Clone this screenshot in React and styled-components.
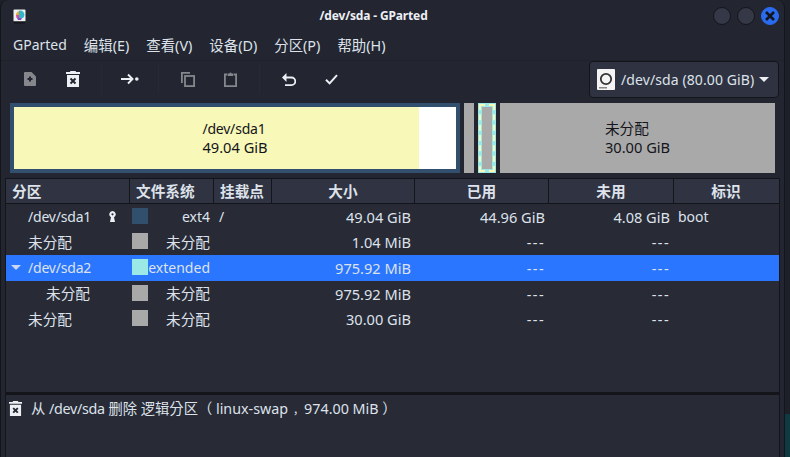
import styled, { createGlobalStyle } from "styled-components"

const FONT = `"Noto Sans", "Noto Sans CJK SC", sans-serif`

const Global = createGlobalStyle`
html, body {
    margin: 0;
    padding: 0;
    height: 457px;
    overflow: hidden;
    background: linear-gradient(#1e2029 414px, #0e3b42 414px);
}
`

const columns = [
    { title: "分区", width: 124, align: "left" },
    { title: "文件系统", width: 84, align: "left" },
    { title: "挂载点", width: 58, align: "left" },
    { title: "大小", width: 143, align: "center" },
    { title: "已用", width: 134, align: "center" },
    { title: "未用", width: 125, align: "center" },
    { title: "标识", width: 106, align: "center" },
]

const rows = [
    { name: "/dev/sda1", indent: 0, key: true, color: "#32506e", fs: "ext4", mount: "/", size: "49.04 GiB", used: "44.96 GiB", free: "4.08 GiB", flag: "boot" },
    { name: "未分配", cjk: true, indent: 0, color: "#a9a9a9", fs: "未分配", size: "1.04 MiB", used: "---", free: "---" },
    { name: "/dev/sda2", indent: 0, expander: true, selected: true, color: "#9ce8e6", fs: "extended", size: "975.92 MiB", used: "---", free: "---" },
    { name: "未分配", cjk: true, indent: 18, color: "#a9a9a9", fs: "未分配", size: "975.92 MiB", used: "---", free: "---" },
    { name: "未分配", cjk: true, indent: 0, color: "#a9a9a9", fs: "未分配", size: "30.00 GiB", used: "---", free: "---" },
]

function TrashIcon({ size = 14, color = "#eceff4" }) {
    return (
        <svg width={size} height={size + 2} viewBox="0 0 14 16">
            <path fill={color} d="M4.5 0h5l.7 1H14v2H0V1h3.8zM1 4h12v12H1z" />
            <path stroke="#232530" strokeWidth="2" d="M4.5 7.5l5 5M9.5 7.5l-5 5" />
        </svg>
    )
}

export default function App() {
    return (
        <Window>
            <Global />
            <TitleBar>
                <AppLogo width="13" height="15" viewBox="0 0 13 15">
                    <rect x="0.5" y="0.5" width="12" height="12" rx="1" fill="#f0f0f0" />
                    <rect x="1" y="12.5" width="11" height="2" fill="#14151b" />
                    <path fill="#35b5c9" d="M6 2c2-1 4 0 5 2s0 4-1 5H6z" />
                    <path fill="#e9a72e" d="M3 6c0-2 1-3 3-4v4z" />
                    <path fill="#d54a9c" d="M3 6h3v3H3.500z" />
                    <path fill="#7b4bc4" d="M4 9h5l-1 2H5z" />
                </AppLogo>
                <Title>/dev/sda - GParted</Title>
                <WindowButtons>
                    <RoundButton />
                    <RoundButton />
                    <RoundButton $close>
                        <svg width="10" height="10" viewBox="0 0 10 10">
                            <path stroke="#14151b" strokeWidth="2.6" d="M1 1l8 8M9 1l-8 8" />
                        </svg>
                    </RoundButton>
                </WindowButtons>
            </TitleBar>

            <MenuBar>
                <MenuItem $latin>GParted</MenuItem>
                <MenuItem>编辑(E)</MenuItem>
                <MenuItem>查看(V)</MenuItem>
                <MenuItem>设备(D)</MenuItem>
                <MenuItem>分区(P)</MenuItem>
                <MenuItem>帮助(H)</MenuItem>
            </MenuBar>

            <ToolBar>
                <ToolGroup>
                    <ToolButton>
                        <svg width="12" height="14" viewBox="0 0 12 14">
                            <path fill="#85878d" d="M1 0h6.500L12 4.500V13a1 1 0 0 1-1 1H1a1 1 0 0 1-1-1V1a1 1 0 0 1 1-1z" />
                            <path stroke="#232530" strokeWidth="2" d="M6 4.500v5M3.500 7h5" />
                        </svg>
                    </ToolButton>
                    <ToolButton>
                        <TrashIcon />
                    </ToolButton>
                </ToolGroup>
                <Separator />
                <ToolGroup>
                    <ToolButton $narrow>
                        <svg width="18" height="14" viewBox="0 0 18 14">
                            <path stroke="#eceff4" strokeWidth="1.9" fill="none" d="M0 7h11M7 2.500L11.500 7 7 11.500" />
                            <circle cx="15.800" cy="7" r="1.800" fill="#eceff4" />
                        </svg>
                    </ToolButton>
                </ToolGroup>
                <Separator />
                <ToolGroup>
                    <ToolButton>
                        <svg width="14" height="15" viewBox="0 0 14 15">
                            <path stroke="#85878d" strokeWidth="1.800" fill="none" d="M.9 11V.9H9" />
                            <rect x="4" y="4" width="9.100" height="10.100" stroke="#85878d" strokeWidth="1.800" fill="none" />
                        </svg>
                    </ToolButton>
                    <ToolButton>
                        <svg width="13" height="15" viewBox="0 0 13 15">
                            <path stroke="#85878d" strokeWidth="1.800" fill="none" d="M3.500 2.500H.9v11.600h11.200V2.500H9.500" />
                            <path fill="#85878d" d="M4 1.500h1.500a1 1 0 0 1 2 0H9V4H4z" />
                        </svg>
                    </ToolButton>
                </ToolGroup>
                <Separator />
                <ToolGroup>
                    <ToolButton>
                        <svg width="14" height="13" viewBox="0 0 14 13">
                            <path stroke="#eceff4" strokeWidth="1.800" fill="none" d="M2 4.500h7.500a3.400 3.400 0 0 1 0 7.600H3" />
                            <path fill="#eceff4" d="M0 4.500L4.500 0v9z" />
                        </svg>
                    </ToolButton>
                    <ToolButton>
                        <svg width="13" height="11" viewBox="0 0 13 11">
                            <path stroke="#eceff4" strokeWidth="2" fill="none" d="M1 5.800l3.600 3.600L12 1.200" />
                        </svg>
                    </ToolButton>
                </ToolGroup>
                <DeviceSelect>
                    <svg width="18" height="21" viewBox="0 0 18 21">
                        <rect width="18" height="21" rx="1" fill="#f4f4f4" />
                        <circle cx="9" cy="10" r="5.200" fill="none" stroke="#333" strokeWidth="1.800" />
                        <rect x="2" y="18" width="8" height="1.500" fill="#888" />
                    </svg>
                    <DeviceName>/dev/sda (80.00 GiB)</DeviceName>
                    <Caret />
                </DeviceSelect>
            </ToolBar>

            <DiskMap>
                <Partition $width={450}>
                    <PartLabel>
                        <PartName>/dev/sda1</PartName>
                        <PartSize>49.04 GiB</PartSize>
                    </PartLabel>
                </Partition>
                <Unallocated $width={10} />
                <Extended>
                    <ExtendedInner />
                </Extended>
                <Unallocated $width={275}>
                    <PartLabel>
                        <PartSize>未分配</PartSize>
                        <PartSize>30.00 GiB</PartSize>
                    </PartLabel>
                </Unallocated>
            </DiskMap>

            <Table>
                <HeaderRow>
                    {columns.map(c => (
                        <HeaderCell key={c.title} $width={c.width} $align={c.align}>{c.title}</HeaderCell>
                    ))}
                </HeaderRow>
                <RowList>
                    {rows.map((r, i) => (
                        <Row key={i} $selected={r.selected}>
                            <NameCell>
                                <Expander>{r.expander && <ExpanderArrow />}</Expander>
                                <Name $indent={r.indent} $cjk={r.cjk}>{r.name}</Name>
                                {r.key && (
                                    <KeyIcon width="7" height="11" viewBox="0 0 7 11">
                                        <path fill="#eceff4" fillRule="evenodd" d="M3.500 0a3.300 3.300 0 0 1 1.500 6.200L6 11H1l1-4.800A3.300 3.300 0 0 1 3.500 0zM3.500 2.200a1.100 1.100 0 1 0 0 2.200 1.100 1.100 0 0 0 0-2.200z" />
                                    </KeyIcon>
                                )}
                            </NameCell>
                            <FsCell>
                                <Swatch $color={r.color} />
                                <FsName $cjk={r.fs === "未分配"}>{r.fs}</FsName>
                            </FsCell>
                            <MountCell>{r.mount}</MountCell>
                            <NumCell $width={143} $dash={r.size === "---"}>{r.size}</NumCell>
                            <NumCell $width={134} $dash={r.used === "---"}>{r.used}</NumCell>
                            <NumCell $width={125} $dash={r.free === "---"}>{r.free}</NumCell>
                            <FlagCell>{r.flag}</FlagCell>
                        </Row>
                    ))}
                </RowList>
            </Table>

            <StatusPanel>
                <TrashIcon size={13} />
                <StatusText>从 <TightPath>/dev/sda</TightPath> 删除 逻辑分区（ linux-swap<Comma>，</Comma>974.00 MiB ）</StatusText>
            </StatusPanel>
        </Window>
    )
}

const Window = styled.div`
width: 785px;
height: 457px;
box-sizing: border-box;
overflow: hidden;
display: flex;
flex-direction: column;
background-color: #232530;
border-right: 1px solid #14151b;
border-left: 1px solid #14151b;
border-radius: 8px 8px 0 0;
color: #dde2eb;
font-family: ${FONT};
font-size: 14px;
`
const TitleBar = styled.div`
position: relative;
height: 31px;
flex: none;
display: flex;
align-items: center;
justify-content: center;
padding-right: 38px;
`
const AppLogo = styled.svg`
position: absolute;
left: 12px;
top: 9px;
`
const Title = styled.div`
font-size: 12px;
font-weight: 700;
letter-spacing: -0.15px;
color: #eceff4;
`
const WindowButtons = styled.div`
position: absolute;
right: 5px;
top: 7px;
display: flex;
gap: 6px;
`
const RoundButton = styled.div`
width: 18px;
height: 18px;
box-sizing: border-box;
border-radius: 50%;
display: flex;
align-items: center;
justify-content: center;
background-color: ${p => p.$close ? "#2a6bf0" : "#353846"};
border: 1px solid ${p => p.$close ? "#2a6bf0" : "#14151b"};
`
const MenuBar = styled.div`
height: 29px;
flex: none;
box-sizing: border-box;
display: flex;
align-items: center;
padding: 0 0 2px 12px;
gap: 17px;
`
const MenuItem = styled.div`
font-size: ${p => p.$latin ? 14 : 14.4}px;
`
const ToolBar = styled.div`
height: 37px;
flex: none;
display: flex;
align-items: center;
padding: 0 5px 0 7px;
border-top: 1px solid #1f212b;
box-sizing: border-box;
`
const ToolGroup = styled.div`
display: flex;
align-items: center;
`
const ToolButton = styled.div`
width: ${p => p.$narrow ? 42 : 43}px;
height: 34px;
display: flex;
align-items: center;
justify-content: center;
`
const Separator = styled.div`
width: 1px;
height: 30px;
background-color: #272a35;
margin: 0 7px;
`
const DeviceSelect = styled.div`
margin-left: auto;
width: 190px;
height: 37px;
flex: none;
box-sizing: border-box;
display: flex;
align-items: center;
gap: 6px;
padding-left: 7px;
background-color: #2f3240;
border: 1px solid #14151b;
border-radius: 4px;
`
const DeviceName = styled.span`
font-size: 14px;
letter-spacing: 0.1px;
`
const Caret = styled.div`
width: 0;
height: 0;
margin-left: -1px;
border-left: 5px solid transparent;
border-right: 5px solid transparent;
border-top: 5px solid #eceff4;
`
const DiskMap = styled.div`
flex: none;
height: 70px;
margin: 6px 0 0 9px;
display: flex;
gap: 4px;
color: #14151b;
line-height: 19px;
`
const Partition = styled.div`
width: ${p => p.$width}px;
box-sizing: border-box;
border: 4px solid #32506e;
display: flex;
align-items: center;
justify-content: center;
background: linear-gradient(90deg, #f8f8b8 405px, #fff 405px);
`
const PartLabel = styled.div`
text-align: left;
`
const PartName = styled.div`
font-size: 14px;
letter-spacing: -0.2px;
`
const PartSize = styled.div`
font-size: 14.67px;
`
const Unallocated = styled.div`
width: ${p => p.$width}px;
background-color: #a9a9a9;
display: flex;
align-items: center;
justify-content: center;
`
const Extended = styled.div`
width: 18px;
box-sizing: border-box;
border: 4px solid #9ce8e6;
outline: 2px dashed #f8f8b8;
outline-offset: -3px;
`
const ExtendedInner = styled.div`
height: 100%;
background-color: #a9a9a9;
`
const Table = styled.div`
flex: none;
margin: 5px 4px 0 4px;
height: 214px;
background-color: #282a36;
border-left: 1px solid #14151b;
border-right: 1px solid #14151b;
display: flex;
flex-direction: column;
`
const HeaderRow = styled.div`
display: flex;
height: 26px;
flex: none;
box-sizing: border-box;
border-bottom: 1px solid #14151b;
border-top: 1px solid #14151b;
background-color: #303341;
`
const HeaderCell = styled.div`
width: ${p => p.$width}px;
flex: none;
box-sizing: border-box;
padding: 0 6px;
border-right: 1px solid #14151b;
font-size: 14.67px;
font-weight: 700;
line-height: 24px;
text-align: ${p => p.$align};
&:last-child {
    width: ${p => p.$width - 2}px;
    border-right: none;
}
`
const RowList = styled.div`
flex: 1;
`
const Row = styled.div`
display: flex;
align-items: center;
height: 25.6px;
background-color: ${p => p.$selected ? "#2a76ff" : "transparent"};
`
const NameCell = styled.div`
width: 124px;
flex: none;
display: flex;
align-items: center;
`
const Expander = styled.div`
width: 22px;
flex: none;
display: flex;
justify-content: center;
`
const ExpanderArrow = styled.div`
width: 0;
height: 0;
margin-right: 2px;
border-left: 5px solid transparent;
border-right: 5px solid transparent;
border-top: 5px solid #c9d6f5;
`
const Name = styled.div`
margin-left: ${p => p.$indent}px;
margin-bottom: ${p => p.$cjk ? 2 : 0}px;
font-size: ${p => p.$cjk ? 14.67 : 14}px;
letter-spacing: ${p => p.$cjk ? 0 : -0.2}px;
`
const KeyIcon = styled.svg`
margin-left: 18px;
`
const FsCell = styled.div`
width: 84px;
flex: none;
display: flex;
align-items: center;
padding-left: 2px;
box-sizing: border-box;
`
const Swatch = styled.div`
width: 16px;
height: 16px;
flex: none;
margin-bottom: 2px;
background-color: ${p => p.$color};
`
const FsName = styled.div`
flex: 1;
text-align: right;
padding-right: 4px;
margin-bottom: ${p => p.$cjk ? 2 : 0}px;
font-size: ${p => p.$cjk ? 14.67 : 14}px;
`
const MountCell = styled.div`
width: 58px;
flex: none;
padding-left: 5px;
box-sizing: border-box;
`
const NumCell = styled.div`
width: ${p => p.$width}px;
flex: none;
text-align: right;
padding-right: 4px;
box-sizing: border-box;
font-size: 14.6px;
letter-spacing: ${p => p.$dash ? 1.4 : 0}px;
`
const FlagCell = styled.div`
flex: 1;
padding-left: 4px;
box-sizing: border-box;
`
const StatusPanel = styled.div`
flex: 1;
margin: 0 4px;
border-left: 1px solid #14151b;
border-right: 1px solid #14151b;
border-top: 3px solid #14151b;
background-color: #282a36;
display: flex;
align-items: flex-start;
gap: 9px;
padding: 6px 0 0 3px;
`
const StatusText = styled.div`
font-family: "Noto Sans", "Noto Sans CJK TC", sans-serif;
font-size: 14.3px;
line-height: 16px;
`
const TightPath = styled.span`
letter-spacing: -0.3px;
`
const Comma = styled.span`
font-family: "Noto Sans CJK SC", sans-serif;
font-size: 11px;
margin-left: 5px;
`
